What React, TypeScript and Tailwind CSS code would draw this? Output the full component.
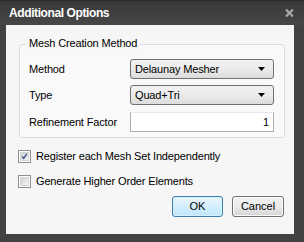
import { ReactNode } from "react";

const font = { fontFamily: '"Liberation Sans", Arial, sans-serif' };

/* ---------- Combo box ---------- */
function Combo({ value }: { value: string }) {
  return (
    <div className="flex h-[20px] w-[144px] items-center justify-between rounded-[3px] border border-[#707070] bg-gradient-to-b from-[#f2f2f2] via-[#ebebeb] to-[#dcdcdc] pl-[4px] pr-[8px] text-[11px] leading-none tracking-[-0.15px] text-black">
      <span>{value}</span>
      <svg width="7" height="4" viewBox="0 0 7 4">
        <path d="M0 0h7L3.5 4z" fill="#000" />
      </svg>
    </div>
  );
}

function Row({ label, children }: { label: string; children: ReactNode }) {
  return (
    <div className="flex h-[20px] items-center">
      <span className="w-[101px] text-[11px] leading-none tracking-[-0.15px]">{label}</span>
      {children}
    </div>
  );
}

/* ---------- Checkbox ---------- */
function Check({ checked, label }: { checked?: boolean; label: string }) {
  return (
    <div className="flex h-[13px] items-center">
      <div className="flex h-[13px] w-[13px] items-center justify-center border border-[#8e8f8f] bg-white">
        <div className="flex h-[9px] w-[9px] items-center justify-center border border-[#d5d5d5] bg-gradient-to-br from-[#cfcfcf] to-[#f6f6f6]">
          {checked && (
            <svg width="9" height="9" viewBox="0 0 9 9">
              <path d="M1.5 4.5 L3.5 7 L7.5 1" stroke="#3a4f8c" strokeWidth="1.7" fill="none" />
            </svg>
          )}
        </div>
      </div>
      <span className="ml-[5px] text-[11px] leading-none tracking-[-0.15px]">{label}</span>
    </div>
  );
}

export default function App() {
  return (
    <div className="h-[242px] w-[304px] bg-[#424242]" style={font}>
      {/* Title bar */}
      <div className="flex h-[25px] items-center justify-between border-t border-[#2a2a2a] bg-gradient-to-b from-[#383838] to-[#474747] pl-[9px] pr-[10px]">
        <span className="text-[12px] font-bold leading-none tracking-[-0.4px] text-white">Additional Options</span>
        <svg width="9" height="8" viewBox="0 0 9 8">
          <path d="M1 0.5 L8 7.5 M8 0.5 L1 7.5" stroke="#a8a8a8" strokeWidth="2.2" />
        </svg>
      </div>

      {/* Client area */}
      <div className="ml-[6px] h-[209px] w-[288px] bg-[#f6f6f6] pt-[19px]">
        <div className="relative ml-[13px] h-[94px] w-[266px] rounded-[3px] border border-[#d5dfe5] bg-[#f9f9f9] pl-[9px] pt-[14px]">
          <span className="absolute -top-[7px] left-[6px] bg-[#f6f6f6] px-[3px] text-[11px] leading-none tracking-[-0.15px]">
            Mesh Creation Method
          </span>
          <div className="flex flex-col gap-[6px]">
            <Row label="Method">
              <Combo value="Delaunay Mesher" />
            </Row>
            <Row label="Type">
              <Combo value="Quad+Tri" />
            </Row>
            <div className="mt-[1px]">
              <Row label="Refinement Factor">
                <div className="flex h-[20px] w-[144px] items-center justify-end border border-[#abadb3] border-t-[#e3e9ef] bg-white pr-[4px] text-[11px] leading-none">
                  1
                </div>
              </Row>
            </div>
          </div>
        </div>

        <div className="ml-[12px] mt-[12px] flex flex-col gap-[12px]">
          <Check checked label="Register each Mesh Set Independently" />
          <Check label="Generate Higher Order Elements" />
        </div>

        <div className="mr-[10px] mt-[8px] flex justify-end gap-[9px]">
          <button className="h-[21px] w-[51px] rounded-[3px] border border-[#3c7fb1] bg-gradient-to-b from-[#eaf6fd] to-[#bee6fd] text-[11px] leading-none shadow-[inset_0_0_0_1px_#d8f0fc]">
            OK
          </button>
          <button className="h-[21px] w-[52px] rounded-[3px] border border-[#707070] bg-gradient-to-b from-[#f2f2f2] via-[#ebebeb] to-[#d5d5d5] text-[11px] leading-none shadow-[inset_0_0_0_1px_#fcfcfc]">
            Cancel
          </button>
        </div>
      </div>
    </div>
  );
}
